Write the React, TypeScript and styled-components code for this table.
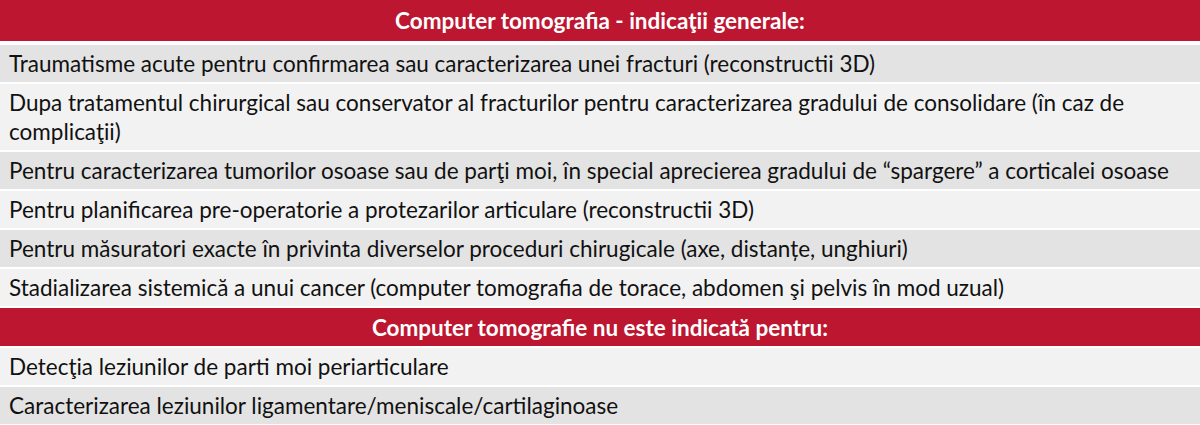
import styled, { createGlobalStyle } from "styled-components";

const GlobalStyle = createGlobalStyle`
  html, body {
    margin: 0;
    padding: 0;
    background: #ffffff;
  }
`;

type RowData = { text: string };

const generalRows: RowData[] = [
  {
    text: "Traumatisme acute pentru confirmarea sau caracterizarea unei fracturi (reconstructii 3D)",
  },
  {
    text: "Dupa tratamentul chirurgical sau conservator al fracturilor pentru caracterizarea gradului de consolidare (în caz de complicaţii)",
  },
  {
    text: "Pentru caracterizarea tumorilor osoase sau de parţi moi, în special aprecierea gradului de “spargere” a corticalei osoase",
  },
  {
    text: "Pentru planificarea pre-operatorie a protezarilor articulare (reconstructii 3D)",
  },
  {
    text: "Pentru măsuratori exacte în privinta diverselor proceduri chirugicale (axe, distanțe, unghiuri)",
  },
  {
    text: "Stadializarea sistemică a unui cancer (computer tomografia de torace, abdomen şi pelvis în mod uzual)",
  },
];

const notIndicatedRows: RowData[] = [
  { text: "Detecţia leziunilor de parti moi periarticulare" },
  { text: "Caracterizarea leziunilor ligamentare/meniscale/cartilaginoase" },
];

function App() {
  return (
    <>
      <GlobalStyle />
      <Table>
        <HeaderRow $first>Computer tomografia - indicaţii generale:</HeaderRow>
        {generalRows.map((row, i) => (
          <Row key={row.text} $shade={i % 2 === 0 ? "dark" : "light"}>
            {row.text}
          </Row>
        ))}
        <HeaderRow>Computer tomografie nu este indicată pentru:</HeaderRow>
        {notIndicatedRows.map((row, i) => (
          <Row key={row.text} $shade={i % 2 === 0 ? "light" : "dark"}>
            {row.text}
          </Row>
        ))}
      </Table>
    </>
  );
}

export default App;

const Table = styled.div`
  display: flex;
  flex-direction: column;
  gap: 2px;
  width: 1200px;
  background: #ffffff;
  font-family: Lato, "Open Sans", sans-serif;
`;

const HeaderRow = styled.div<{ $first?: boolean }>`
  display: flex;
  align-items: center;
  justify-content: center;
  height: ${({ $first }) => ($first ? "41px" : "38px")};
  margin-bottom: ${({ $first }) => ($first ? "2px" : "0")};
  background-color: #bc1630;
  color: #ffffff;
  font-size: 22.5px;
  font-weight: 700;
`;

const Row = styled.div<{ $shade: "dark" | "light" }>`
  padding: 4px 12px 4px 9px;
  background-color: ${({ $shade }) => ($shade === "dark" ? "#e3e3e3" : "#f2f2f2")};
  color: #111111;
  font-size: 22.5px;
  line-height: 29px;
`;
